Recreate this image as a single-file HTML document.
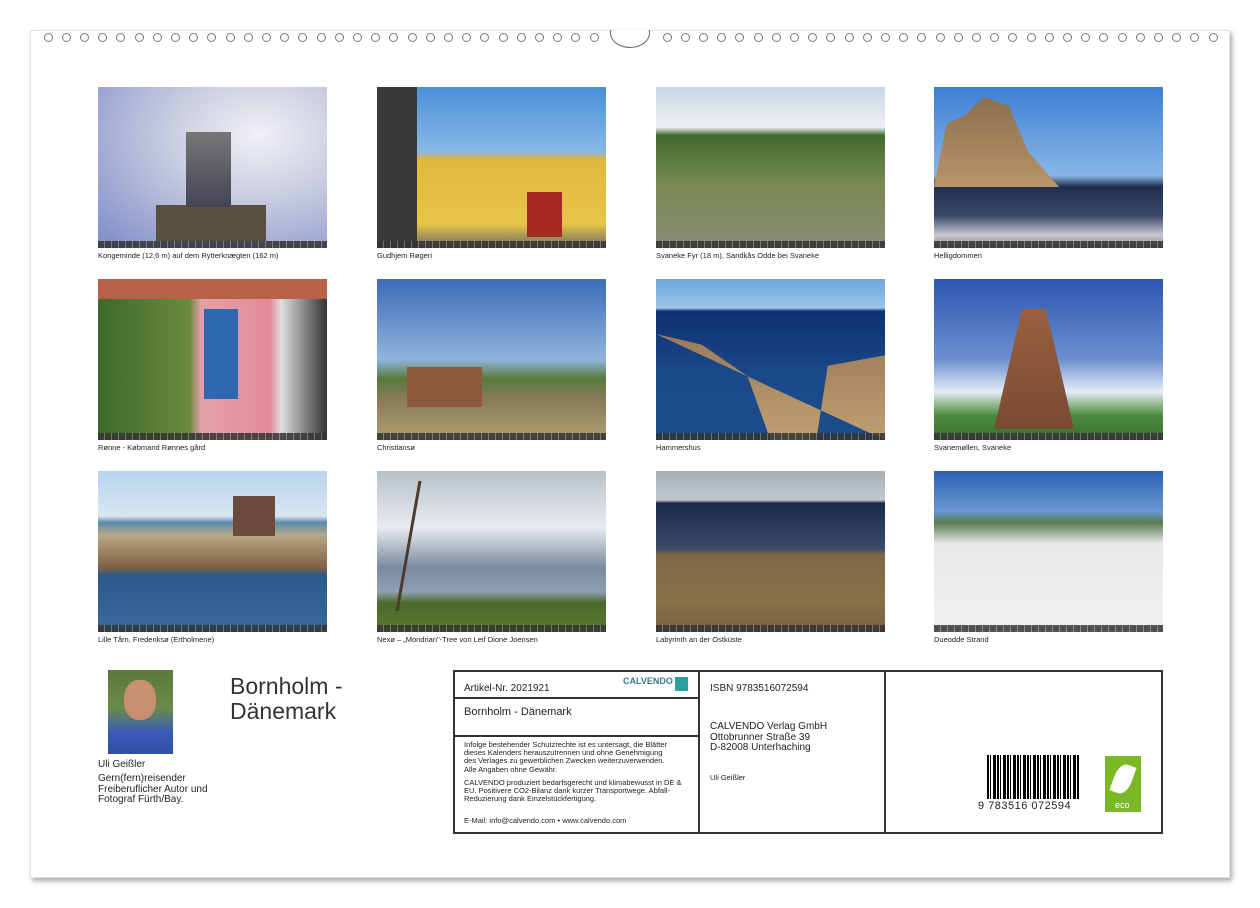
<!DOCTYPE html>
<html><head><meta charset="utf-8"><style>
*{margin:0;padding:0;box-sizing:border-box}
body{width:1260px;height:908px;background:#fff;position:relative;font-family:"Liberation Sans",Arial,sans-serif;overflow:hidden}
.page{position:absolute;left:30px;top:30px;width:1200px;height:848px;background:#fff;border:1px solid #e4e4e4;box-shadow:2px 3px 5px rgba(0,0,0,.35)}
.hole{position:absolute;top:33px;width:9px;height:9px;border:1px solid #777;border-radius:50%;background:#fff}
.arc{position:absolute;left:610px;top:18px;width:40px;height:30px;border:1px solid #666;border-radius:50%;border-top-color:transparent;background:#fff;clip-path:inset(12px 0 0 0)}
.ph{position:absolute;width:229px;height:161px;overflow:hidden}
.ph:after{content:"";position:absolute;left:0;right:0;bottom:0;height:7px;background:repeating-linear-gradient(90deg,#333 0 6px,#777 6px 7px);opacity:.85}
.cap{position:absolute;font-size:7.5px;color:#222}
.t{position:absolute;color:#222}
</style></head><body>
<div class="page"></div>
<div id="holes"></div>
<div class="arc"></div>
<script>
var h='';for(var i=0;i<31;i++){h+='<div class="hole" style="left:'+(43.5+i*18.2)+'px"></div>'}
for(var i=0;i<31;i++){h+='<div class="hole" style="left:'+(662.5+i*18.2)+'px"></div>'}
document.getElementById('holes').innerHTML=h;
</script>

<div class="ph" style="left:98px;top:87px;background:radial-gradient(ellipse at 70% 30%,#f0f0f5 0,#c8cce0 40%,#7d8ac8 100%)"><div style="position:absolute;left:58px;top:118px;width:110px;height:36px;background:#5a5040"></div><div style="position:absolute;left:88px;top:45px;width:45px;height:75px;background:linear-gradient(#777,#445)"></div></div>
<div class="ph" style="left:377px;top:87px;background:linear-gradient(#4b8fd8 0,#86b8e8 40%,#e0b840 45%,#e8c448 85%,#6a6a6a 100%)"><div style="position:absolute;left:0;top:0;width:40px;height:161px;background:#3b3a38"></div><div style="position:absolute;left:150px;top:105px;width:35px;height:45px;background:#a52a20"></div></div>
<div class="ph" style="left:656px;top:87px;background:linear-gradient(#c9d6e6 0,#eef0f2 25%,#3f6a2e 30%,#7a8a50 60%,#8a8a78 100%)"></div>
<div class="ph" style="left:934px;top:87px;background:linear-gradient(#3d7fd4 0,#87b6e6 55%,#1e2e4a 62%,#3a4a6a 80%,#c8c8d0 92%,#888 100%)"><div style="position:absolute;left:0;top:10px;width:125px;height:90px;background:linear-gradient(#8a7050,#b89468);clip-path:polygon(0 100%,10% 30%,25% 20%,40% 0,60% 10%,75% 60%,100% 100%)"></div></div>

<div class="ph" style="left:98px;top:279px;background:linear-gradient(90deg,#3d6a2a 0,#6a8a3e 40%,#e4a0a8 45%,#e48a98 75%,#ddd 80%,#333 100%)"><div style="position:absolute;left:0;top:0;width:229px;height:20px;background:#b86048"></div><div style="position:absolute;left:106px;top:30px;width:34px;height:90px;background:#2f68b0"></div></div>
<div class="ph" style="left:377px;top:279px;background:linear-gradient(#3c6cb8 0,#90b4dc 50%,#5a7a3a 62%,#8a7a5a 75%,#b0a070 100%)"><div style="position:absolute;left:30px;top:88px;width:75px;height:40px;background:#8a5a3a"></div></div>
<div class="ph" style="left:656px;top:279px;background:linear-gradient(#6aa8e0 0,#9cc4e8 18%,#0f3070 20%,#1a4a8a 60%,#1d4c8a 100%)"><div style="position:absolute;left:0;top:55px;width:229px;height:106px;background:linear-gradient(#9a7a5a,#c0a070);clip-path:polygon(0 0,20% 10%,40% 40%,50% 100%,0 100%,70% 100%,75% 30%,100% 20%,100% 100%)"></div></div>
<div class="ph" style="left:934px;top:279px;background:linear-gradient(#2c56b0 0,#6c90d0 50%,#e4ecf6 70%,#4a8a3a 85%,#3a7030 100%)"><div style="position:absolute;left:60px;top:30px;width:80px;height:120px;background:linear-gradient(#9a6040,#7a4a34);clip-path:polygon(35% 0,65% 0,100% 100%,0 100%)"></div></div>

<div class="ph" style="left:98px;top:471px;background:linear-gradient(#b8d4ee 0,#d8e6f2 28%,#5a8aa8 32%,#b8a888 40%,#806040 60%,#2a5a8a 65%,#3a6a9a 100%)"><div style="position:absolute;left:135px;top:25px;width:42px;height:40px;background:#6a4a3a"></div></div>
<div class="ph" style="left:377px;top:471px;background:linear-gradient(#b8c0c8 0,#e8ecf0 35%,#7a8aa0 60%,#90a0b0 75%,#4a6a2a 82%,#5a7a30 100%)"><div style="position:absolute;left:30px;top:10px;width:55px;height:130px;border-left:3px solid #4a3a30;transform:skewX(-10deg)"></div></div>
<div class="ph" style="left:656px;top:471px;background:linear-gradient(#a8b0b8 0,#c0c6cc 18%,#1a2a48 20%,#3a4a68 48%,#806848 52%,#8a7048 80%,#7a6040 100%)"></div>
<div class="ph" style="left:934px;top:471px;background:linear-gradient(#2a60b4 0,#6a98d0 25%,#5a7a50 32%,#e8e8e8 45%,#f2f2f2 100%)"></div>

<div class="cap" style="left:98px;top:251px">Kongeminde (12,6 m) auf dem Rytterknægten (162 m)</div>
<div class="cap" style="left:377px;top:251px">Gudhjem Røgeri</div>
<div class="cap" style="left:656px;top:251px">Svaneke Fyr (18 m), Sandkås Odde bei Svaneke</div>
<div class="cap" style="left:934px;top:251px">Helligdommen</div>
<div class="cap" style="left:98px;top:443px">Rønne - Købmand Rønnes gård</div>
<div class="cap" style="left:377px;top:443px">Christiansø</div>
<div class="cap" style="left:656px;top:443px">Hammershus</div>
<div class="cap" style="left:934px;top:443px">Svanemøllen, Svaneke</div>
<div class="cap" style="left:98px;top:635px">Lille Tårn, Frederiksø (Ertholmene)</div>
<div class="cap" style="left:377px;top:635px">Nexø – „Mondrian"-Tree von Leif Dione Joensen</div>
<div class="cap" style="left:656px;top:635px">Labyrinth an der Ostküste</div>
<div class="cap" style="left:934px;top:635px">Dueodde Strand</div>

<div style="position:absolute;left:108px;top:670px;width:65px;height:84px;background:linear-gradient(#5a7a3a 0,#6a8a4a 45%,#3a5ab8 75%,#3050a8 100%)"><div style="position:absolute;left:16px;top:10px;width:32px;height:40px;border-radius:45%;background:#c89070"></div></div>
<div class="t" style="left:98px;top:759px;font-size:10px">Uli Geißler</div>
<div class="t" style="left:98px;top:774px;font-size:10px;line-height:10.5px">Gern(fern)reisender<br>Freiberuflicher Autor und<br>Fotograf Fürth/Bay.</div>
<div class="t" style="left:230px;top:674px;font-size:23px;line-height:25px;color:#333">Bornholm -<br>Dänemark</div>

<div style="position:absolute;left:453px;top:670px;width:710px;height:164px;border:2px solid #333"></div>
<div style="position:absolute;left:698px;top:670px;width:2px;height:164px;background:#333"></div>
<div style="position:absolute;left:884px;top:670px;width:2px;height:164px;background:#333"></div>
<div style="position:absolute;left:453px;top:697px;width:246px;height:2px;background:#333"></div>
<div style="position:absolute;left:453px;top:735px;width:246px;height:2px;background:#333"></div>
<div class="t" style="left:464px;top:683px;font-size:10px">Artikel-Nr. 2021921</div>
<div class="t" style="left:623px;top:676px;font-size:9px;color:#3a7a8a;font-weight:bold">CALVENDO</div>
<div style="position:absolute;left:675px;top:677px;width:13px;height:14px;background:#2aa0a0"></div>
<div class="t" style="left:464px;top:706px;font-size:11px">Bornholm - Dänemark</div>
<div class="t" style="left:464px;top:741px;font-size:7.5px;line-height:8.2px;width:205px">Infolge bestehender Schutzrechte ist es untersagt, die Blätter dieses Kalenders herauszutrennen und ohne Genehmigung des Verlages zu gewerblichen Zwecken weiterzuverwenden. Alle Angaben ohne Gewähr.</div>
<div class="t" style="left:464px;top:779px;font-size:7.5px;line-height:8.2px;width:232px">CALVENDO produziert bedarfsgerecht und klimabewusst in DE &amp; EU. Positivere CO2-Bilanz dank kurzer Transportwege. Abfall-Reduzierung dank Einzelstückfertigung.</div>
<div class="t" style="left:464px;top:816px;font-size:7.5px">E-Mail: info@calvendo.com • www.calvendo.com</div>
<div class="t" style="left:710px;top:683px;font-size:10px">ISBN 9783516072594</div>
<div class="t" style="left:710px;top:722px;font-size:10px;line-height:10.5px">CALVENDO Verlag GmbH<br>Ottobrunner Straße 39<br>D-82008 Unterhaching</div>
<div class="t" style="left:710px;top:773px;font-size:7.5px">Uli Geißler</div>
<div style="position:absolute;left:987px;top:755px;width:92px;height:46px;background:repeating-linear-gradient(90deg,#000 0 2px,#fff 2px 3px,#000 3px 4px,#fff 4px 6px,#000 6px 9px,#fff 9px 10px)"></div>
<div style="position:absolute;left:985px;top:799px;width:96px;height:14px;background:#fff"></div>
<div class="t" style="left:978px;top:800px;font-size:11px;letter-spacing:.5px">9 783516 072594</div>
<div style="position:absolute;left:1105px;top:756px;width:36px;height:56px;background:#7ab828"><span style="position:absolute;left:10px;bottom:2px;color:#fff;font-size:9px">eco</span><div style="position:absolute;left:9px;top:8px;width:18px;height:30px;border-radius:50% 0;background:#fff;transform:rotate(20deg)"></div></div>
</body></html>
